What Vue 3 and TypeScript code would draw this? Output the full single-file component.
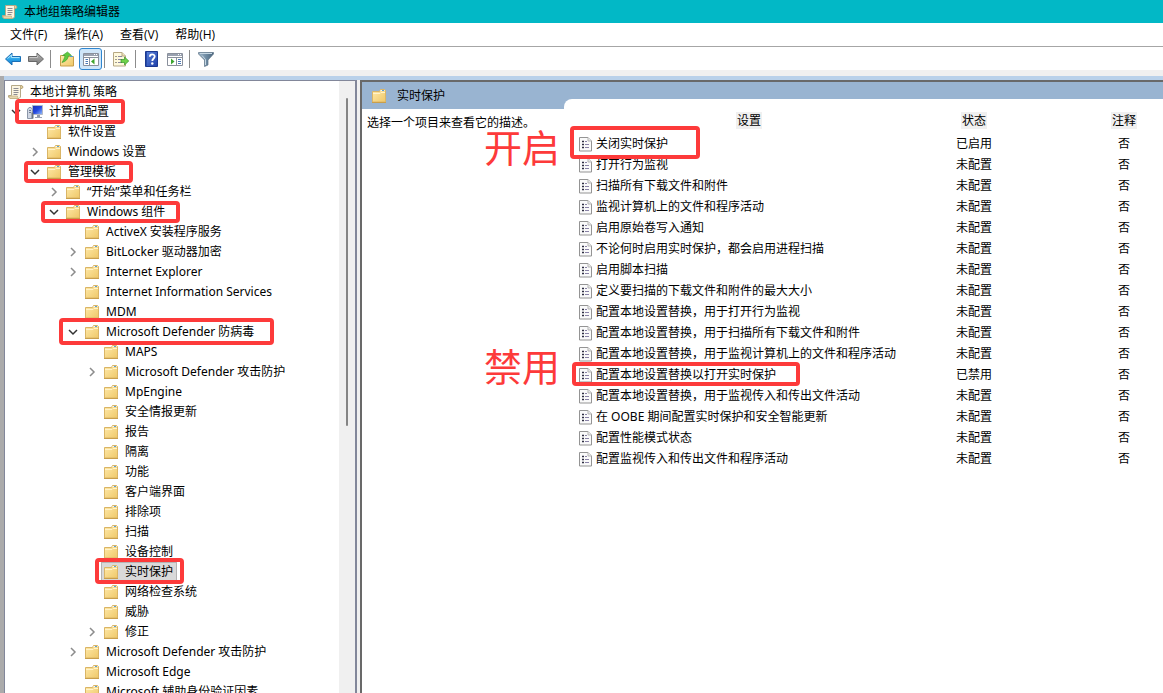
<script setup lang="ts">
import { ref } from 'vue'

type Toggle = 'open' | 'closed' | ''

interface TreeNode {
  label: string
  level: number
  toggle: Toggle
  icon: 'scroll' | 'computer' | 'folder'
}

interface Setting {
  name: string
  state: string
}

const node = (level: number, label: string, toggle: Toggle = '', icon: TreeNode['icon'] = 'folder'): TreeNode => ({
  level,
  label,
  toggle,
  icon,
})

const menus = ['文件(F)', '操作(A)', '查看(V)', '帮助(H)']

const nodes: TreeNode[] = [
  node(0, '本地计算机 策略', '', 'scroll'),
  node(1, '计算机配置', 'open', 'computer'),
  node(2, '软件设置'),
  node(2, 'Windows 设置', 'closed'),
  node(2, '管理模板', 'open'),
  node(3, '“开始”菜单和任务栏', 'closed'),
  node(3, 'Windows 组件', 'open'),
  node(4, 'ActiveX 安装程序服务'),
  node(4, 'BitLocker 驱动器加密', 'closed'),
  node(4, 'Internet Explorer', 'closed'),
  node(4, 'Internet Information Services'),
  node(4, 'MDM'),
  node(4, 'Microsoft Defender 防病毒', 'open'),
  node(5, 'MAPS'),
  node(5, 'Microsoft Defender 攻击防护', 'closed'),
  node(5, 'MpEngine'),
  node(5, '安全情报更新'),
  node(5, '报告'),
  node(5, '隔离'),
  node(5, '功能'),
  node(5, '客户端界面'),
  node(5, '排除项'),
  node(5, '扫描'),
  node(5, '设备控制'),
  node(5, '实时保护'),
  node(5, '网络检查系统'),
  node(5, '威胁'),
  node(5, '修正', 'closed'),
  node(4, 'Microsoft Defender 攻击防护', 'closed'),
  node(4, 'Microsoft Edge'),
  node(4, 'Microsoft 辅助身份验证因素'),
]

const selected = ref('实时保护')

const settings: Setting[] = [
  { name: '关闭实时保护', state: '已启用' },
  { name: '打开行为监视', state: '未配置' },
  { name: '扫描所有下载文件和附件', state: '未配置' },
  { name: '监视计算机上的文件和程序活动', state: '未配置' },
  { name: '启用原始卷写入通知', state: '未配置' },
  { name: '不论何时启用实时保护，都会启用进程扫描', state: '未配置' },
  { name: '启用脚本扫描', state: '未配置' },
  { name: '定义要扫描的下载文件和附件的最大大小', state: '未配置' },
  { name: '配置本地设置替换，用于打开行为监视', state: '未配置' },
  { name: '配置本地设置替换，用于扫描所有下载文件和附件', state: '未配置' },
  { name: '配置本地设置替换，用于监视计算机上的文件和程序活动', state: '未配置' },
  { name: '配置本地设置替换以打开实时保护', state: '已禁用' },
  { name: '配置本地设置替换，用于监视传入和传出文件活动', state: '未配置' },
  { name: '在 OOBE 期间配置实时保护和安全智能更新', state: '未配置' },
  { name: '配置性能模式状态', state: '未配置' },
  { name: '配置监视传入和传出文件和程序活动', state: '未配置' },
]
</script>

<template>
  <div class="window">
    <svg class="defs" aria-hidden="true">
      <defs>
        <linearGradient id="g-folder" x1="0" y1="0" x2="1" y2="1">
          <stop offset="0" stop-color="#ffeaab" />
          <stop offset="1" stop-color="#efc868" />
        </linearGradient>
        <linearGradient id="g-blue" x1="0" y1="0" x2="0" y2="1">
          <stop offset="0" stop-color="#7fd4f8" />
          <stop offset="0.5" stop-color="#2aa5ea" />
          <stop offset="1" stop-color="#1479cc" />
        </linearGradient>
        <linearGradient id="g-gray" x1="0" y1="0" x2="0" y2="1">
          <stop offset="0" stop-color="#b4b4b4" />
          <stop offset="1" stop-color="#777" />
        </linearGradient>
        <linearGradient id="g-screen" x1="0" y1="0" x2="1" y2="1">
          <stop offset="0" stop-color="#1a2fb4" />
          <stop offset="0.5" stop-color="#2348e0" />
          <stop offset="1" stop-color="#9cc4fa" />
        </linearGradient>
        <linearGradient id="g-help" x1="0" y1="0" x2="1" y2="1">
          <stop offset="0" stop-color="#5b83dc" />
          <stop offset="1" stop-color="#1e3fa8" />
        </linearGradient>
        <linearGradient id="g-funnel" x1="0" y1="0" x2="1" y2="0">
          <stop offset="0" stop-color="#9fb6c8" />
          <stop offset="0.5" stop-color="#6f8ca4" />
          <stop offset="1" stop-color="#4b657c" />
        </linearGradient>
      </defs>
      <symbol id="i-folder" viewBox="0 0 16 16">
        <path d="M1.500 3.500h7l1-2h4l1 1v11.500h-13z" fill="url(#g-folder)" stroke="#dab566" />
        <path d="M9.500 2.500h4" stroke="#fffbe8" />
        <path d="M11 2.500h2" stroke="#5aa0d8" />
        <path d="M2 5.500h7l1-1H14" fill="none" stroke="#fff3cb" />
        <path d="M1 14.500h14" stroke="#c99f4b" />
      </symbol>
      <symbol id="i-scroll" viewBox="0 0 16 16">
        <path d="M3.500 1.500h10.500l1 1.500-1 1.500h-1.500V13l-1.500 1.500H2L.5 13v-1.500h3z" fill="#fbf5e2" stroke="#b5a988" />
        <path d="M1 12h8.500v1l1 1.500H2L1 13z" fill="#e6d7ae" stroke="#bda97a" stroke-width=".6" />
        <path d="M12.500 4.500V2l1-.5 1.500 1.500-1 1.500z" fill="#e2d0a0" stroke="#b39f70" stroke-width=".7" />
        <path d="M5.500 4.500h5M5.500 6.500h5M5.500 8.500h5M5.500 10.500h4" stroke="#8c8c92" />
      </symbol>
      <symbol id="i-computer" viewBox="0 0 16 16">
        <path d="M5.500 1.500h10v9h-10z" fill="url(#g-screen)" stroke="#b3b8c6" />
        <path d="M10 11h3v2h-3z" fill="#8f98a8" />
        <path d="M8 13.500h7" stroke="#9aa3b3" />
        <path d="M.5 5.500l1.500-2h2l1.500 2v9h-5z" fill="#cfd6e2" stroke="#8b96a8" />
        <path d="M2 6.500h2M2 8.500h2" stroke="#6f7b90" />
        <path d="M5.500 8.500v6" stroke="#6a7482" stroke-width="2" />
      </symbol>
      <symbol id="i-doc" viewBox="0 0 14 16">
        <path d="M.5 1.500h8.500l3.500 3.500v10h-12z" fill="#fafafa" stroke="#949494" />
        <path d="M9 1.500V5h3.500" fill="#ececec" stroke="#b5b5b5" />
        <path d="M3 5.500h2M3 8.500h2M3 11.500h2" stroke="#2e2e42" stroke-width="1.500" />
        <path d="M6 5.500h2M6 8.500h4M6 11.500h4" stroke="#8982a6" />
      </symbol>
    </svg>

    <header class="titlebar">
      <svg class="icon"><use href="#i-scroll" /></svg>
      <span>本地组策略编辑器</span>
    </header>

    <nav class="menubar">
      <button v-for="menu in menus" :key="menu" type="button">{{ menu }}</button>
    </nav>

    <div class="toolbar">
      <button type="button" aria-label="后退">
        <svg class="icon" viewBox="0 0 16 16">
          <path d="M.5 8 7 2v3.500h8.500v5H7V14z" fill="url(#g-blue)" stroke="#1b6fb5" />
          <path d="M2.500 7.500 6.500 4v2.500h8" fill="none" stroke="#a7e2fb" />
        </svg>
      </button>
      <button type="button" aria-label="前进">
        <svg class="icon" viewBox="0 0 16 16">
          <path d="M15.500 8 9 2v3.500H.5v5H9V14z" fill="url(#g-gray)" stroke="#686868" />
          <path d="M1.500 6.500h8V4.500" fill="none" stroke="#c6c6c6" />
        </svg>
      </button>
      <i class="sep"></i>
      <button type="button" aria-label="上移一级">
        <svg class="icon" viewBox="0 0 16 16">
          <path d="M1.500 4.500h5l1 1h7v9.500h-13z" fill="url(#g-folder)" stroke="#c99f4b" />
          <path d="M11 5.500h3" stroke="#4c9bd4" />
          <path d="M3 11.500C4.500 9 5.500 7.500 6 4.500H3.500L8.500 1l4 3.500H9.500C9 8 7 10.500 3 11.500z" fill="#5fca3f" stroke="#379a2a" stroke-width=".6" />
        </svg>
      </button>
      <button type="button" class="pressed" aria-label="显示控制台树">
        <svg class="icon" viewBox="0 0 16 16">
          <path d="M.5 2.500h15v12H.5z" fill="#fff" stroke="#8a909c" />
          <path d="M1 4h14" stroke="#9aa2b0" stroke-width="2" />
          <path d="M11 3.500h1M13 3.500h1" stroke="#fff" />
          <path d="M1 6.500h14M6.500 7v7" stroke="#8a909c" />
          <path d="M2.500 8.500h2.500M2.500 10.500h2.500M2.500 12.500h2.500" stroke="#4a78b4" />
          <path d="M11.500 7.500v6L8 10.500z" fill="#3da52f" />
        </svg>
      </button>
      <i class="sep"></i>
      <button type="button" aria-label="导出列表">
        <svg class="icon" viewBox="0 0 16 16">
          <path d="M.5 1.500H9L12.500 5v10H.5z" fill="#fff9dd" stroke="#b6a884" />
          <path d="M9 1.500V5h3.500" fill="#efe3b8" stroke="#b6a884" />
          <path d="M2.500 5.500h1M2.500 8.500h1M2.500 11.500h1" stroke="#3c3c3c" />
          <path d="M5 5.500h4M5 8.500h4M5 11.500h4" stroke="#8a86a0" />
          <path d="M8 8.500h3.500v-2.500l4.300 4-4.300 4v-2.500H8z" fill="#6ed24a" stroke="#35952a" stroke-width=".7" />
        </svg>
      </button>
      <i class="sep"></i>
      <button type="button" aria-label="帮助">
        <svg class="icon" viewBox="0 0 16 16">
          <path d="M1.500.5h12v15h-12z" fill="url(#g-help)" stroke="#1b3890" />
          <path d="M2.500 1v14" stroke="#274ba8" />
          <path d="M5.800 5.800C5.800 2.500 10.700 2.700 10.700 5.500 10.700 7.500 8.300 7.500 8.300 10" fill="none" stroke="#fff" stroke-width="1.800" />
          <circle cx="8.300" cy="12.500" r="1.200" fill="#fff" />
        </svg>
      </button>
      <button type="button" aria-label="显示操作窗格">
        <svg class="icon" viewBox="0 0 16 16">
          <path d="M.5 2.500h15v12H.5z" fill="#fff" stroke="#8a909c" />
          <path d="M1 4h14" stroke="#9aa2b0" stroke-width="2" />
          <path d="M11 3.500h1M13 3.500h1" stroke="#fff" />
          <path d="M1 6.500h14M9.500 7v7" stroke="#8a909c" />
          <path d="M11 8.500h3M11 10.500h3M11 12.500h3" stroke="#4a78b4" />
          <path d="M4 7.500v6l3.500-3z" fill="#3da52f" />
        </svg>
      </button>
      <i class="sep"></i>
      <button type="button" aria-label="筛选器">
        <svg class="icon" viewBox="0 0 16 16">
          <path d="M.5 1.500h15v1.500L10 9v5l-3.500 1.500V9L.5 3z" fill="url(#g-funnel)" stroke="#5b7287" stroke-width=".7" />
          <path d="M2 2.500h12" stroke="#c7d8e4" />
          <path d="M4 4.500 7.500 8.500v5.500" fill="none" stroke="#c7d8e4" />
        </svg>
      </button>
    </div>

    <main class="workspace">
      <section class="tree-pane">
        <ul class="tree">
          <li v-for="(item, i) in nodes" :key="i" :class="['row', 'level-' + item.level]">
            <button v-if="item.toggle" type="button" :class="['toggle', item.toggle]" :aria-label="item.label">
              <svg viewBox="0 0 10 10"><path d="M3 1l4 4-4 4" /></svg>
            </button>
            <span v-else class="toggle"></span>
            <button type="button" :class="['node', { selected: item.label === selected }]" @click="selected = item.label">
              <svg class="icon"><use :href="'#i-' + item.icon" /></svg>
              <span>{{ item.label }}</span>
            </button>
          </li>
        </ul>
        <div class="scrollbar"><div class="thumb"></div></div>
      </section>

      <section class="detail-pane">
        <header class="detail-head">
          <div class="detail-title">
            <svg class="icon"><use href="#i-folder" /></svg>
            <span>实时保护</span>
          </div>
          <div class="detail-tab"></div>
        </header>
        <div class="detail-body">
          <p class="description">选择一个项目来查看它的描述。</p>
          <table class="settings">
            <colgroup>
              <col class="col-name" />
              <col class="col-state" />
              <col class="col-note" />
            </colgroup>
            <thead>
              <tr>
                <th><span>设置</span></th>
                <th><span>状态</span></th>
                <th><span>注释</span></th>
              </tr>
            </thead>
            <tbody>
              <tr v-for="item in settings" :key="item.name">
                <td>
                  <div class="name">
                    <svg class="doc"><use href="#i-doc" /></svg>
                    <span>{{ item.name }}</span>
                  </div>
                </td>
                <td>{{ item.state }}</td>
                <td>否</td>
              </tr>
            </tbody>
          </table>
        </div>
      </section>
    </main>

    <div class="mark mark-computer"></div>
    <div class="mark mark-templates"></div>
    <div class="mark mark-components"></div>
    <div class="mark mark-defender"></div>
    <div class="mark mark-realtime"></div>
    <div class="mark mark-disable"></div>
    <div class="mark mark-override"></div>
    <strong class="note note-on">开启</strong>
    <strong class="note note-off">禁用</strong>
  </div>
</template>

<style>
body {
  margin: 0;
}
</style>

<style scoped>
.window {
  position: relative;
  display: flex;
  flex-direction: column;
  height: 100vh;
  overflow: hidden;
  background: #fff;
  color: #000;
  font: 12px/20px "Noto Sans", "Noto Sans CJK SC", sans-serif;
  white-space: nowrap;
}

.defs {
  position: absolute;
  width: 0;
  height: 0;
}

button {
  margin: 0;
  padding: 0;
  border: 0;
  background: none;
  color: inherit;
  font: inherit;
}

.icon {
  display: block;
  flex: none;
  width: 16px;
  height: 16px;
}

.titlebar {
  display: flex;
  flex: none;
  align-items: center;
  gap: 6px;
  height: 23px;
  padding-left: 2px;
  background: #02b8c6;
}

.menubar {
  display: flex;
  flex: none;
  gap: 17px;
  height: 23px;
  padding-left: 10px;
  border-bottom: 1px solid #a6a6a6;
  font-family: "Open Sans", "Noto Sans CJK SC", sans-serif;
}

.toolbar {
  display: flex;
  flex: none;
  align-items: center;
  height: 23px;
  padding-left: 2px;
  border-bottom: 6px solid #f0f0f0;
}

.toolbar button {
  display: flex;
  align-items: center;
  box-sizing: border-box;
  width: 23px;
  height: 22px;
  padding-left: 3px;
}

.toolbar .pressed {
  border: 1px solid #2f86d0;
  border-radius: 3px;
  background: #cfe6f9;
}

.sep {
  width: 1px;
  height: 18px;
  margin: 0 5px 0 2px;
  background: #8c8c8c;
}

.workspace {
  display: flex;
  flex: 1;
  min-height: 0;
  border-top: 4px solid #b9d1ea;
  background: #f0f0f0;
}

.workspace::before {
  flex: none;
  width: 4px;
  margin-top: -4px;
  background: #ababab;
  content: "";
}

.tree-pane {
  display: flex;
  flex: none;
  box-sizing: border-box;
  width: 353px;
  overflow: hidden;
  border: 1px solid #82879a;
  border-bottom: 0;
  border-right-width: 2px;
  background: #fff;
}

.tree {
  flex: 1;
  margin: 0;
  padding: 1px 0 0;
  list-style: none;
}

.row {
  display: flex;
  height: 20px;
}

.level-0 { margin-left: -13px; }
.level-1 { padding-left: 6px; }
.level-2 { padding-left: 25px; }
.level-3 { padding-left: 44px; }
.level-4 { padding-left: 63px; }
.level-5 { padding-left: 82px; }

.toggle {
  display: flex;
  flex: none;
  align-items: center;
  width: 14px;
}

.toggle svg {
  width: 10px;
  height: 10px;
  fill: none;
  stroke: #8c8c8c;
  stroke-width: 1.500;
}

.toggle.open svg {
  transform: rotate(90deg);
  stroke: #333;
}

.node {
  display: flex;
  align-items: center;
  gap: 6px;
  padding: 0 4px 0 2px;
}

.node.selected {
  background: #d9d9d9;
  box-shadow: inset 0 0 0 1px #b4b4b4;
}

.scrollbar {
  flex: none;
  width: 16px;
  padding-top: 17px;
  background: #f0f0f0;
}

.thumb {
  width: 2px;
  height: 328px;
  margin-left: 7px;
  border-radius: 1px;
  background: #858585;
}

.detail-pane {
  flex: 1;
  min-width: 0;
  margin-left: 3px;
  overflow: hidden;
  border-top: 2px solid #696969;
  border-left: 2px solid #696969;
  background: #fff;
}

.detail-head {
  display: flex;
  height: 27px;
  background: #99b4d1;
}

.detail-title {
  display: flex;
  align-items: center;
  gap: 10px;
  box-sizing: border-box;
  width: 202px;
  padding-left: 9px;
}

.detail-tab {
  flex: 1;
  align-self: flex-end;
  height: 10px;
  border-top-left-radius: 8px;
  background: #fff;
}

.detail-body {
  display: grid;
  grid-template-columns: 212px 1fr;
  align-items: start;
}

.description {
  margin: 0;
  padding: 4px 0 0 5px;
}

.settings {
  width: 650px;
  border-collapse: collapse;
  table-layout: fixed;
}

.col-name { width: 350px; }
.col-state { width: 100px; }
.col-note { width: 200px; }

.settings th,
.settings td {
  height: 21px;
  padding: 0;
  font-weight: 400;
  line-height: 20px;
  text-align: center;
}

.settings th {
  height: 24px;
}

.settings th span {
  display: inline-block;
  padding: 0 1px;
  background: #f0f0f0;
  line-height: 17px;
}

.name {
  display: flex;
  align-items: center;
  gap: 3px;
  padding-left: 5px;
}

.doc {
  flex: none;
  width: 14px;
  height: 16px;
}

.mark {
  position: absolute;
  box-sizing: border-box;
  border: 4px solid #fd3a3a;
  border-radius: 4px;
  pointer-events: none;
}

.mark-computer { left: 15px; top: 99px; width: 110px; height: 25px; }
.mark-templates { left: 24px; top: 161px; width: 109px; height: 22px; }
.mark-components { left: 41px; top: 201px; width: 139px; height: 22px; }
.mark-defender { left: 59px; top: 318px; width: 215px; height: 27px; }
.mark-realtime { left: 95px; top: 558px; width: 89px; height: 26px; }
.mark-disable { left: 570px; top: 126px; width: 130px; height: 33px; }
.mark-override { left: 572px; top: 362px; width: 228px; height: 24px; }

.note {
  position: absolute;
  left: 484px;
  color: #fd3a3a;
  font-size: 38px;
  font-weight: 400;
  line-height: 40px;
}

.note-on { top: 127px; }
.note-off { top: 346px; }
</style>
